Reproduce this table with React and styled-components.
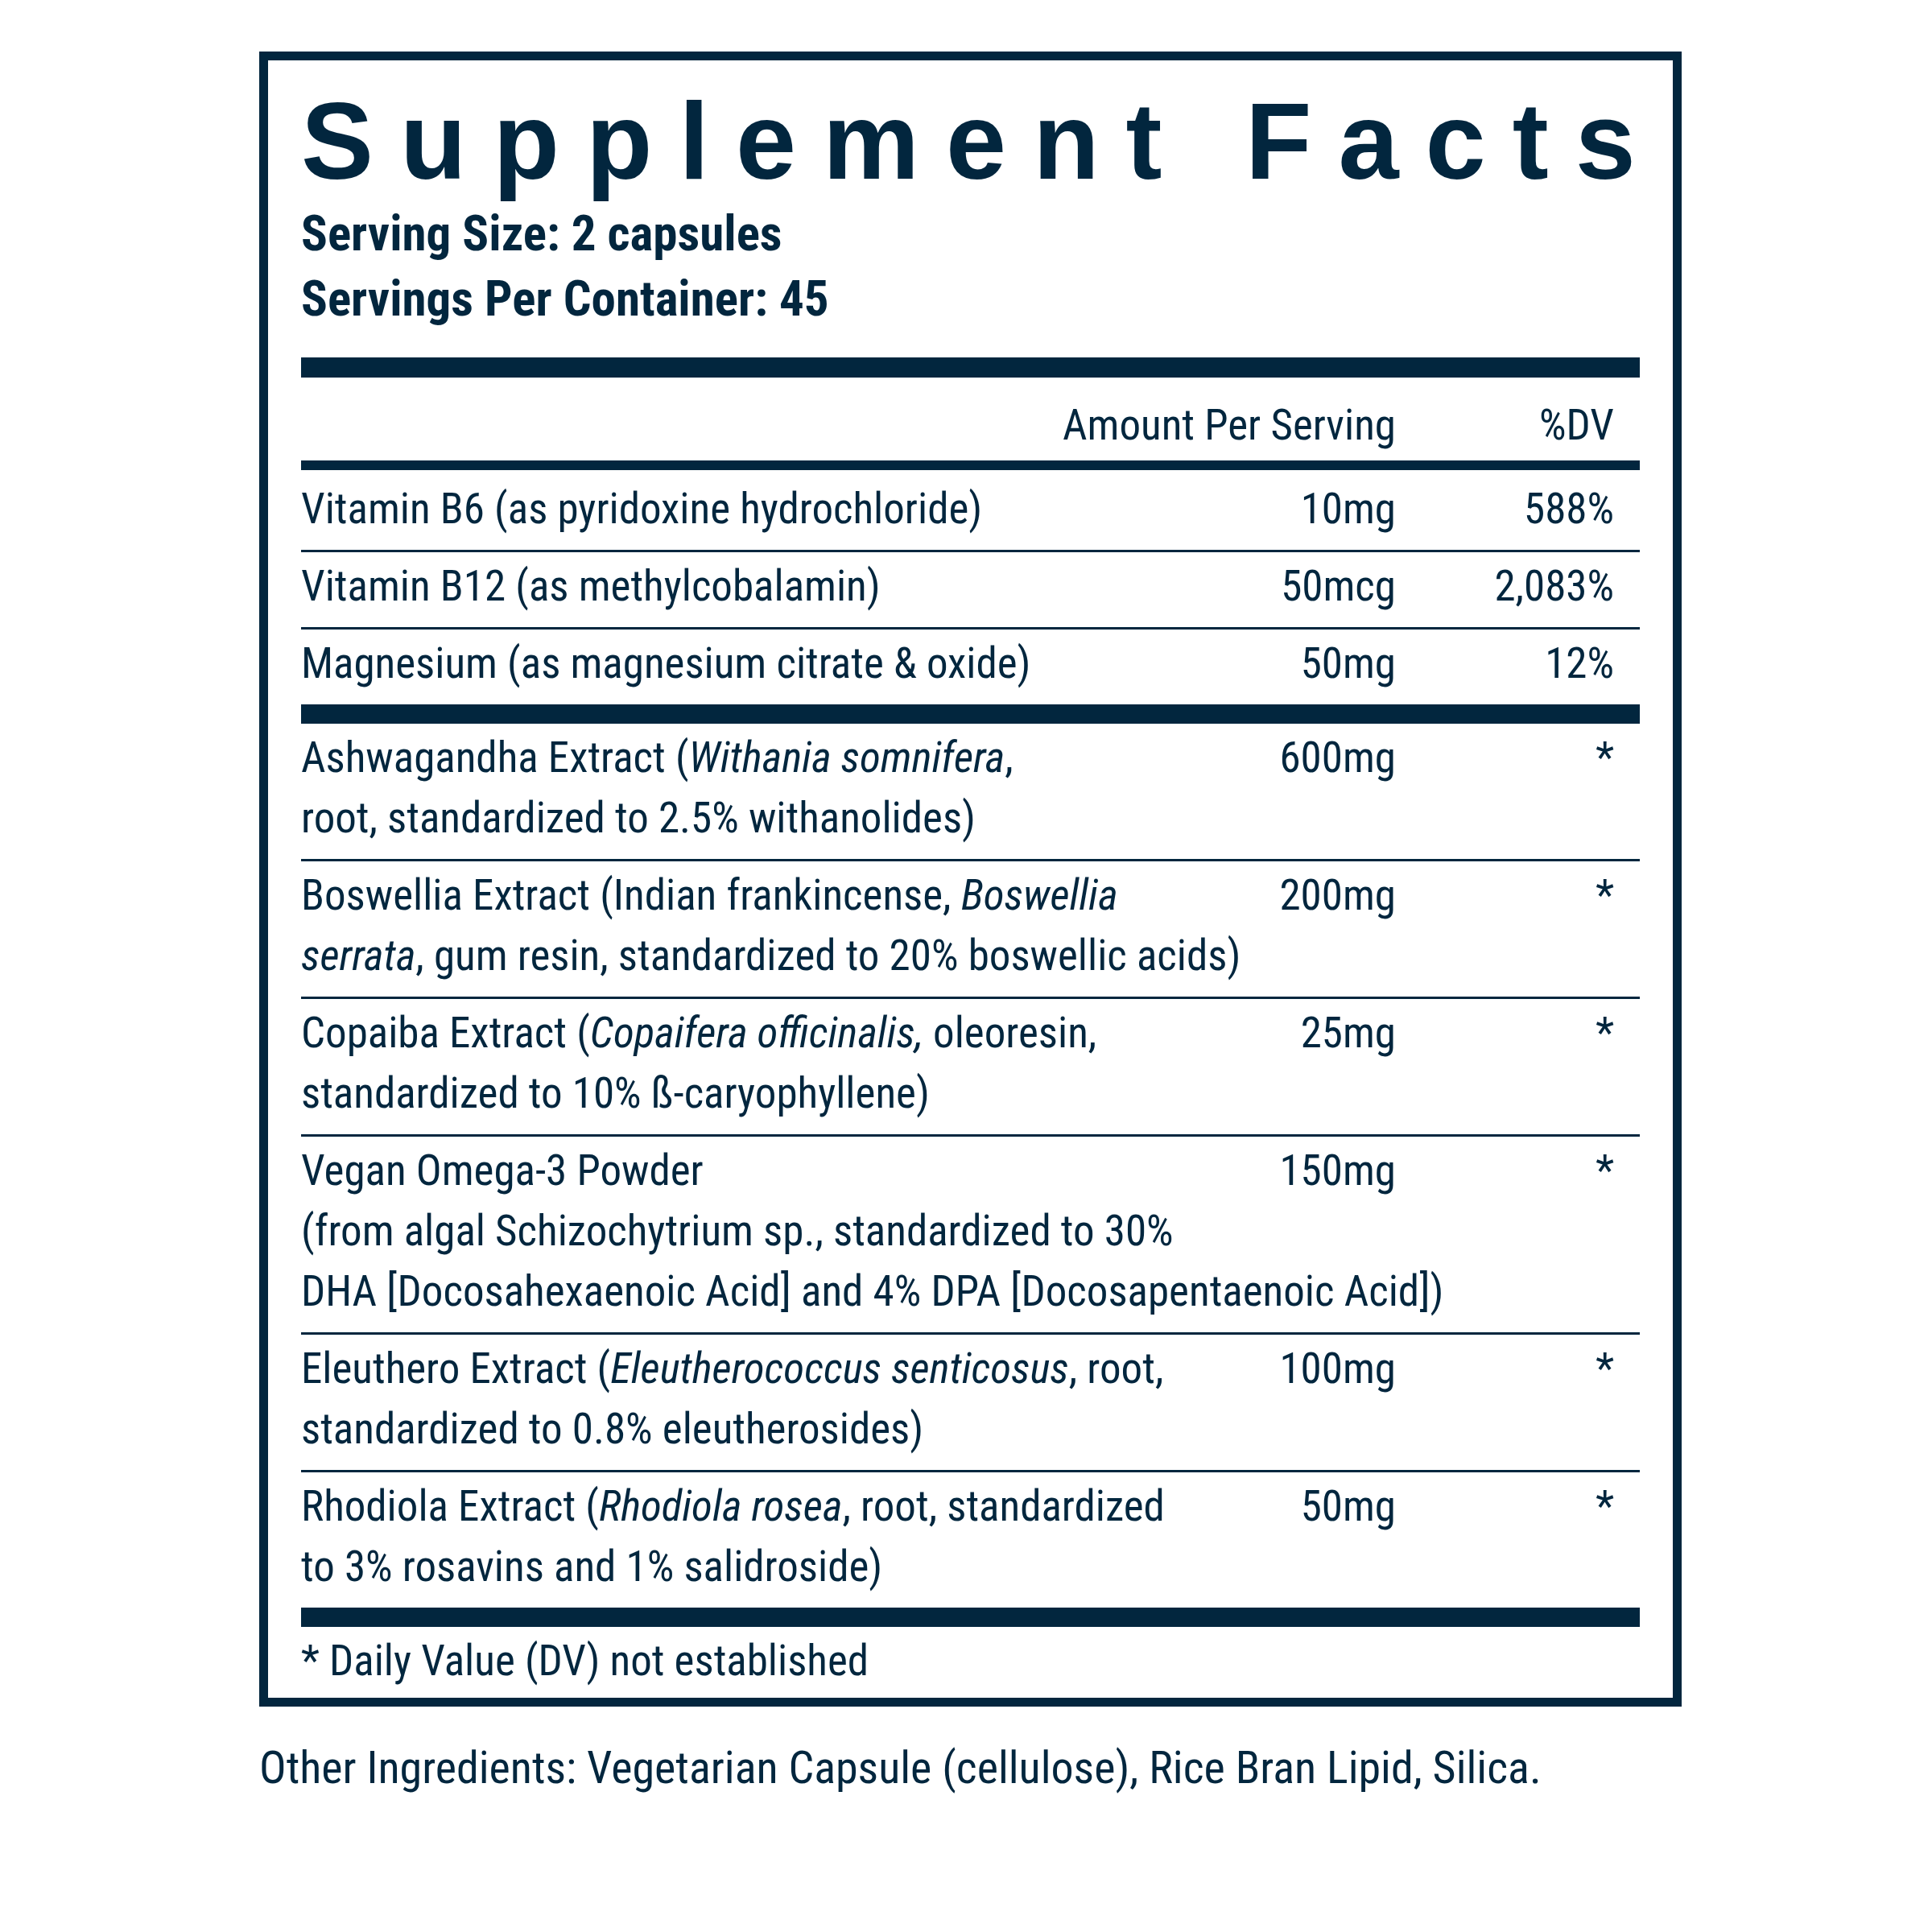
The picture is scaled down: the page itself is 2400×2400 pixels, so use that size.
import React from "react";
import styled, { createGlobalStyle } from "styled-components";

const navy = "#02263e";
const narrow = `"Roboto Condensed", "Noto Sans", "Liberation Sans Narrow", sans-serif`;

const ingredients = [
  {
    lines: [
      <>Ashwagandha Extract (<i>Withania somnifera</i>,</>,
      "root, standardized to 2.5% withanolides)",
    ],
    amount: "600mg",
  },
  {
    lines: [
      <>Boswellia Extract (Indian frankincense, <i>Boswellia</i></>,
      <><i>serrata</i>, gum resin, standardized to 20% boswellic acids)</>,
    ],
    amount: "200mg",
  },
  {
    lines: [
      <>Copaiba Extract (<i>Copaifera officinalis,</i> oleoresin,</>,
      "standardized to 10% ß-caryophyllene)",
    ],
    amount: "25mg",
  },
  {
    lines: [
      "Vegan Omega-3 Powder",
      "(from algal Schizochytrium sp., standardized to 30%",
      "DHA [Docosahexaenoic Acid] and 4% DPA [Docosapentaenoic Acid])",
    ],
    amount: "150mg",
  },
  {
    lines: [
      <>Eleuthero Extract (<i>Eleutherococcus senticosus</i>, root,</>,
      "standardized to 0.8% eleutherosides)",
    ],
    amount: "100mg",
  },
  {
    lines: [
      <>Rhodiola Extract (<i>Rhodiola rosea</i>, root, standardized</>,
      "to 3% rosavins and 1% salidroside)",
    ],
    amount: "50mg",
  },
];

const vitamins = [
  { name: "Vitamin B6 (as pyridoxine hydrochloride)", amount: "10mg", dv: "588%" },
  { name: "Vitamin B12 (as methylcobalamin)", amount: "50mcg", dv: "2,083%" },
  { name: "Magnesium (as magnesium citrate & oxide)", amount: "50mg", dv: "12%" },
];

const App = () => (
  <>
    <GlobalStyle />
    <Page>
      <Panel>
        <Title>Supplement Facts</Title>
        <Serving>
          <div>Serving Size: 2 capsules</div>
          <div>Servings Per Container: 45</div>
        </Serving>
        <Rule $size={25} $top={32} />
        <HeaderRow>
          <span />
          <Amount>Amount Per Serving</Amount>
          <Dv>%DV</Dv>
        </HeaderRow>
        <Rule $size={12} $bottom={6} />
        {vitamins.map((v, i) => (
          <React.Fragment key={v.name}>
            {i > 0 && <Rule $size={3} />}
            <Row>
              <Name>{v.name}</Name>
              <Amount>{v.amount}</Amount>
              <Dv>{v.dv}</Dv>
            </Row>
          </React.Fragment>
        ))}
        <Rule $size={24} />
        {ingredients.map((item, i) => (
          <React.Fragment key={i}>
            {i > 0 && <Rule $size={3} />}
            <Row>
              <Name>
                {item.lines.map((line, j) => (
                  <div key={j}>{line}</div>
                ))}
              </Name>
              <Amount>{item.amount}</Amount>
              <Dv>*</Dv>
            </Row>
          </React.Fragment>
        ))}
        <Rule $size={24} />
        <Footnote>* Daily Value (DV) not established</Footnote>
      </Panel>
      <Other>Other Ingredients: Vegetarian Capsule (cellulose), Rice Bran Lipid, Silica.</Other>
    </Page>
  </>
);

const GlobalStyle = createGlobalStyle`
  html, body {
    margin: 0;
    background: #ffffff;
  }
  body {
    font-family: ${narrow};
    font-stretch: condensed;
    color: ${navy};
  }
`;

const Page = styled.main`
  padding: 64px 0 0 322px;
  width: 1767px;
`;

const Panel = styled.section`
  box-sizing: border-box;
  width: 1767px;
  border: 11px solid ${navy};
  padding: 0 41px 8px;
`;

const Title = styled.h1`
  margin: 0;
  padding-top: 33px;
  font-family: "Liberation Sans", Arial, sans-serif;
  font-stretch: normal;
  font-weight: 700;
  font-size: 135px;
  line-height: 135px;
  letter-spacing: 33px;
  white-space: nowrap;
`;

const Serving = styled.div`
  margin-top: 7px;
  font-weight: 700;
  font-size: 61px;
  line-height: 81px;
`;

const Rule = styled.div`
  height: ${(p) => p.$size}px;
  background: ${navy};
  margin-top: ${(p) => p.$top || 0}px;
  margin-bottom: ${(p) => p.$bottom || 0}px;
`;

const Row = styled.div`
  display: grid;
  grid-template-columns: minmax(0, 1fr) 420px 303px;
  align-items: start;
  padding: 5px 0 13px;
  font-size: 53px;
  line-height: 75px;
`;

const HeaderRow = styled(Row)`
  padding: 22px 0 6px;
`;

const Name = styled.div`
  white-space: nowrap;

  i {
    font-style: italic;
  }
`;

const Amount = styled.div`
  text-align: right;
  white-space: nowrap;
`;

const Dv = styled.div`
  text-align: right;
  padding-right: 32px;
  white-space: nowrap;
`;

const Footnote = styled.p`
  margin: 0;
  padding-top: 5px;
  font-size: 53px;
  line-height: 75px;
`;

const Other = styled.p`
  margin: 36px 0 0;
  font-size: 56px;
  line-height: 80px;
  white-space: nowrap;
`;

export default App;
